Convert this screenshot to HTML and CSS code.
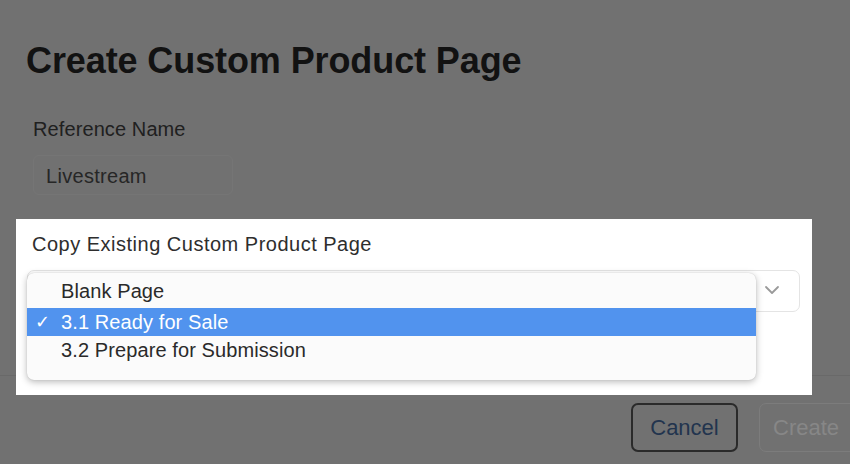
FILE: index.html
```html
<!DOCTYPE html>
<html>
<head>
<meta charset="utf-8">
<link rel="stylesheet" href="styles.css">
</head>
<body>
<div class="modal">
  <h1 class="title">Create Custom Product Page</h1>
  <div class="field">
    <div class="label">Reference Name</div>
    <div class="input">Livestream</div>
  </div>
  <div class="spotlight">
    <div class="label spot-label">Copy Existing Custom Product Page</div>
    <div class="select-wrap">
      <div class="select">
        <svg class="chevron" width="16" height="10" viewBox="0 0 16 10"><path d="M2 2 L8 8 L14 2" fill="none" stroke="#9a9a9a" stroke-width="1.8" stroke-linecap="round" stroke-linejoin="round"/></svg>
      </div>
      <ul class="menu">
        <li class="item first"><span class="check"></span>Blank Page</li>
        <li class="item active"><span class="check">✓</span>3.1 Ready for Sale</li>
        <li class="item"><span class="check"></span>3.2 Prepare for Submission</li>
      </ul>
    </div>
  </div>
  <div class="footer">
    <button class="btn cancel">Cancel</button>
    <button class="btn create">Create</button>
  </div>
</div>
</body>
</html>
```
FILE: styles.css
```css
html, body {
  margin: 0;
  padding: 0;
  overflow: hidden;
}
body {
  width: 850px;
  height: 464px;
  background: #717171;
  font-family: "Liberation Sans", Arial, sans-serif;
}
.modal {
  padding-top: 39px;
}
.title {
  margin: 0 0 0 26px;
  font-size: 36px;
  line-height: 44px;
  font-weight: bold;
  color: #121212;
  letter-spacing: -0.1px;
}
.field {
  margin-top: 34px;
  padding-left: 33px;
}
.label {
  font-size: 20px;
  line-height: 24px;
  color: #202020;
  letter-spacing: 0.1px;
}
.input {
  margin-top: 14px;
  width: 200px;
  height: 40px;
  line-height: 40px;
  padding-left: 12px;
  font-size: 20px;
  color: #262626;
  letter-spacing: 0.3px;
  border: 1px solid rgba(255,255,255,0.03);
  box-sizing: border-box;
  border-radius: 6px;
}
.spotlight {
  position: relative;
  z-index: 1;
  margin: 24px 0 0 16px;
  width: 796px;
  height: 176px;
  box-sizing: border-box;
  background: #ffffff;
  padding: 13px 0 0 11px;
}
.spot-label {
  padding-left: 5px;
  color: #2e2e2e;
  letter-spacing: 0.5px;
}
.select-wrap {
  position: relative;
  margin-top: 14px;
}
.select {
  width: 773px;
  height: 42px;
  box-sizing: border-box;
  border: 1px solid #e4e4e4;
  border-radius: 7px;
  display: flex;
  align-items: center;
  justify-content: flex-end;
  padding-right: 19px;
}
.chevron {
  display: block;
  margin-top: -2px;
}
.menu {
  position: absolute;
  top: 3px;
  left: 0;
  width: 729px;
  margin: 0;
  padding: 7px 0 16px 0;
  list-style: none;
  background: #fbfbfb;
  border-radius: 7px;
  box-shadow: 0 2px 7px rgba(0,0,0,0.28), 0 0 1px rgba(0,0,0,0.2);
}
.item {
  height: 28px;
  box-sizing: border-box;
  display: flex;
  align-items: center;
  font-size: 20px;
  color: #2a2a2a;
  letter-spacing: 0.1px;
}
.item.first {
  padding-bottom: 6px;
}
.check {
  width: 34px;
  padding-left: 8px;
  box-sizing: border-box;
  font-size: 18px;
}
.item.active {
  background: #5193ee;
  color: #ffffff;
}
.footer {
  margin-top: -20px;
  border-top: 1px solid #696969;
  padding-top: 27px;
  display: flex;
  justify-content: flex-end;
  gap: 21px;
  margin-right: -16px;
}
.btn {
  width: 107px;
  height: 49px;
  box-sizing: border-box;
  border-radius: 7px;
  background: transparent;
  font-family: "Liberation Sans", Arial, sans-serif;
  font-size: 22px;
  padding: 0;
}
.cancel {
  border: 2px solid #2a2a2a;
  color: #22344e;
}
.create {
  border: 1px solid #7c7c7c;
  color: #878787;
  text-align: left;
  padding-left: 13px;
}
```
